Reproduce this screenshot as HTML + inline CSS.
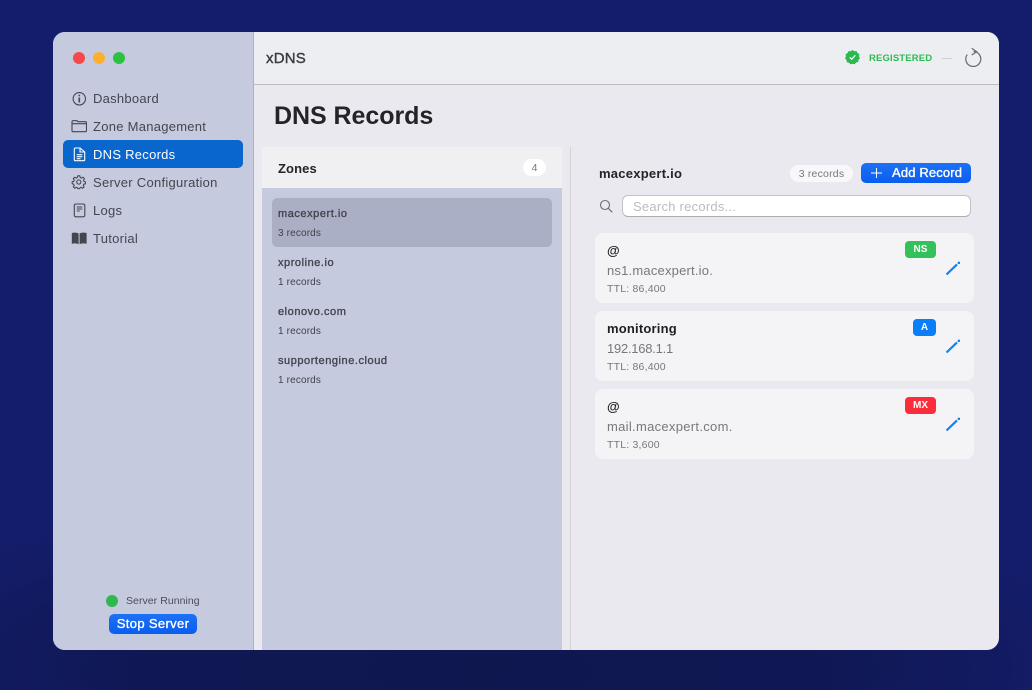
<!DOCTYPE html>
<html><head><meta charset="utf-8"><style>
*{box-sizing:border-box;margin:0;padding:0}
html,body{width:1032px;height:690px;overflow:hidden;background:#141d6b;font-family:"Liberation Sans",sans-serif}
.a{position:absolute;white-space:nowrap}
#bgs{position:absolute;left:0;top:0;width:1032px;height:690px;background:radial-gradient(ellipse 640px 190px at 480px 670px,#0f174f 0%,rgba(15,23,79,.8) 55%,rgba(20,29,107,0) 100%)}
#win{position:absolute;left:53px;top:32px;width:946px;height:618px;border-radius:12px;overflow:hidden;background:#e9e9ef}
.nav{position:absolute;left:40px;font-size:13px;line-height:16px;color:#43454f;letter-spacing:.27px;white-space:nowrap}
.ic{position:absolute;left:18px}
.z1{position:absolute;left:225px;font-size:11px;color:#42444f;line-height:14px;white-space:nowrap;letter-spacing:.55px;-webkit-text-stroke:.35px #42444f}
.z2{position:absolute;left:225px;font-size:10px;color:#3f414c;line-height:13px;white-space:nowrap;letter-spacing:.15px}
.card{position:absolute;left:542px;width:379px;height:70px;background:#f4f4f7;border-radius:8px}
.t1{position:absolute;left:12px;top:9.500px;font-size:13px;font-weight:bold;color:#1f1f22;line-height:16px;letter-spacing:.2px}
.t2{position:absolute;left:12px;top:29.500px;font-size:13px;color:#77777c;line-height:16px;letter-spacing:.2px}
.t3{position:absolute;left:12px;top:49.500px;font-size:10.5px;color:#77777c;line-height:13px;letter-spacing:.2px}
.tag{position:absolute;top:8px;height:17px;border-radius:4px;color:#fff;font-size:10px;font-weight:bold;text-align:center;line-height:18px}
.pen{position:absolute;left:350px;top:27px}
</style></head><body>
<div id="bgs"></div>
<div id="win">
 <div class="a" style="left:0;top:0;width:201px;height:618px;background:#c5cadf;border-right:1px solid #acb0c6"></div>
 <div class="a" style="left:20px;top:20px;width:12px;height:12px;border-radius:50%;background:#f6484a"></div>
 <div class="a" style="left:40px;top:20px;width:12px;height:12px;border-radius:50%;background:#fdb02f"></div>
 <div class="a" style="left:60px;top:20px;width:12px;height:12px;border-radius:50%;background:#2cc13f"></div>

 <div class="a" style="left:10px;top:108px;width:180px;height:28px;border-radius:5px;background:#0866cc"></div>

 <svg class="ic" style="top:59px" width="16" height="16" viewBox="0 0 16 16" fill="none" stroke="#43454f"><circle cx="8.300" cy="7.800" r="6.200" stroke-width="1.100"/><path d="M8.300 6.500v5" stroke-width="1.600"/><path d="M8.300 3.800v1.500" stroke-width="1.600"/></svg>
 <div class="nav" style="top:59px">Dashboard</div>
 <svg class="ic" style="top:87px" width="16" height="16" viewBox="0 0 16 16" fill="none" stroke="#43454f" stroke-width="1.100"><path d="M1 2.800V11.700a1 1 0 0 0 1 1H14.500a1 1 0 0 0 1-1V3.700a1 1 0 0 0-1-1H7L6 1.700H2A1 1 0 0 0 1 2.800Z"/><path d="M1 4.700H15.500"/></svg>
 <div class="nav" style="top:87px">Zone Management</div>
 <svg class="ic" style="top:115px" width="16" height="16" viewBox="0 0 16 16" fill="none" stroke="#fff" stroke-width="1.100"><path d="M3.300 2a1 1 0 0 1 1-1H9L13.700 5V12.700a1 1 0 0 1-1 1H4.300a1 1 0 0 1-1-1Z"/><path d="M9 1V5H13.700"/><path d="M5.700 7.700H11.300M5.700 9.700H11.300M5.700 11.700H9.500"/></svg>
 <div class="nav" style="top:115px;color:#fff">DNS Records</div>
 <svg class="ic" style="top:143px" width="16" height="16" viewBox="0 0 16 16" fill="none" stroke="#43454f" stroke-width="1.100"><g transform="translate(.2 -.6) scale(.95)"><circle cx="8" cy="8" r="2.200"/><path d="M6.900 1.500H9.100L9.500 3.300 10.900 3.900 12.400 2.900 13.900 4.500 13 6 13.500 7.400 15 7.900V10L13.300 10.300 12.700 11.700 13.600 13.200 12 14.600 10.500 13.600 9.200 14.200 8.900 15H7L6.600 14.200 5.200 13.600 3.800 14.600 2.200 13.100 3.200 11.600 2.600 10.200 1 9.900V7.800L2.700 7.400 3.200 6 2.200 4.500 3.700 3 5.200 3.900 6.500 3.300Z" stroke-linejoin="round"/></g></svg>
 <div class="nav" style="top:143px">Server Configuration</div>
 <svg class="ic" style="top:171px" width="16" height="16" viewBox="0 0 16 16" fill="none" stroke="#43454f" stroke-width="1.100"><rect x="3.300" y="1" width="10.500" height="12.800" rx="1.500"/><path d="M5.800 4H11.300M5.800 6H11.300M5.800 8H8.800"/></svg>
 <div class="nav" style="top:171px">Logs</div>
 <svg class="ic" style="top:199px" width="16" height="16" viewBox="0 0 16 16" fill="#43454f"><path d="M7.600 2.500C6 1.500 3 1.300 .8 2V12.800C3 12.200 6 12.300 7.600 13.300ZM8.600 2.500C10 1.500 13.300 1.300 15.600 2V12.800C13.300 12.200 10 12.300 8.600 13.300Z"/></svg>
 <div class="nav" style="top:199px">Tutorial</div>

 <div class="a" style="left:53px;top:563px;width:12px;height:12px;border-radius:50%;background:#2eb84f"></div>
 <div class="a" style="left:73px;top:562px;font-size:10.500px;line-height:14px;color:#4a4c58;letter-spacing:.05px">Server Running</div>
 <div class="a" style="left:56px;top:582px;width:88px;height:20px;border-radius:5px;background:linear-gradient(#1c72f4,#0a5ef0);color:#fff;font-size:13px;line-height:19px;text-align:center;letter-spacing:.35px;-webkit-text-stroke:.35px #fff">Stop Server</div>

 <div class="a" style="left:201px;top:0;width:745px;height:53px;background:#edeef2;border-bottom:1px solid #bdbdc0"></div>
 <div class="a" style="left:213px;top:18px;font-size:15px;line-height:18px;color:#3a3a40;letter-spacing:.2px;-webkit-text-stroke:.4px #3a3a40">xDNS</div>
 <svg class="a" style="left:791px;top:17px" width="17" height="17" viewBox="0 0 17 17"><path d="M8.500 1 10.400 2.200 12.600 2.100 13.500 4 15.400 5.100 15 7.300 16 9.200 14.500 10.800 14.300 13 12.100 13.500 10.700 15.200 8.500 14.700 6.400 15.400 5 13.600 2.800 13.200 2.500 11 1 9.400 2 7.400 1.600 5.200 3.500 4.100 4.400 2.200 6.600 2.300Z" fill="#2bb84f"/><path d="M5.700 8.300 7.700 10.300 11.300 6.300" fill="none" stroke="#fff" stroke-width="1.200"/></svg>
 <div class="a" style="left:816px;top:20px;font-size:9.500px;line-height:13px;font-weight:bold;color:#2fba52;letter-spacing:.15px">REGISTERED</div>
 <div class="a" style="left:889px;top:26px;width:10px;height:1px;background:#cfcfd3"></div>
 <svg class="a" style="left:911px;top:15px" width="18" height="20" viewBox="0 0 18 20" fill="none" stroke="#6a6a6f" stroke-width="1.200"><path d="M3.200 7.600A7.500 7.500 0 1 0 9.500 4.500"/><path d="M7.700 1.300 12.700 4.700 7.700 8"/></svg>

 <div class="a" style="left:221px;top:68px;font-size:25px;line-height:32px;font-weight:bold;color:#242427;letter-spacing:-.05px">DNS Records</div>

 <div class="a" style="left:209px;top:115px;width:300px;height:503px;background:#c5cadf"></div>
 <div class="a" style="left:209px;top:115px;width:300px;height:41px;background:#f0f0f3"></div>
 <div class="a" style="left:225px;top:129px;font-size:13px;line-height:16px;font-weight:bold;color:#242427;letter-spacing:.1px">Zones</div>
 <div class="a" style="left:470px;top:127px;width:23px;height:17px;border-radius:9px;background:#fff;color:#77777c;font-size:10.500px;line-height:19px;text-align:center">4</div>
 <div class="a" style="left:219px;top:166px;width:280px;height:49px;border-radius:5px;background:#abafc5"></div>
 <div class="z1" style="top:175px">macexpert.io</div><div class="z2" style="top:195px">3 records</div>
 <div class="z1" style="top:224px">xproline.io</div><div class="z2" style="top:244px">1 records</div>
 <div class="z1" style="top:273px">elonovo.com</div><div class="z2" style="top:293px">1 records</div>
 <div class="z1" style="top:322px">supportengine.cloud</div><div class="z2" style="top:342px">1 records</div>

 <div class="a" style="left:517px;top:115px;width:1px;height:503px;background:#d3d3d8"></div>

 <div class="a" style="left:546px;top:134px;font-size:13px;line-height:16px;font-weight:bold;color:#242427;letter-spacing:.25px">macexpert.io</div>
 <div class="a" style="left:737px;top:133px;width:63px;height:17px;border-radius:9px;background:#f8f8fa;color:#77777c;font-size:10.500px;line-height:19px;text-align:center;letter-spacing:.2px">3 records</div>
 <div class="a" style="left:808px;top:131px;width:110px;height:20px;border-radius:5px;background:linear-gradient(#1c72f4,#0a5ef0)"></div>
 <svg class="a" style="left:817px;top:135px" width="13" height="13" viewBox="0 0 13 13" stroke="#fff" stroke-width="1"><path d="M6.500 1V11M1 6H12"/></svg>
 <div class="a" style="left:839px;top:132px;font-size:13px;line-height:18px;color:#fff;letter-spacing:.15px;-webkit-text-stroke:.35px #fff">Add Record</div>

 <svg class="a" style="left:546px;top:167px" width="15" height="15" viewBox="0 0 15 15" fill="none" stroke="#6d6d72" stroke-width="1.100"><circle cx="6" cy="6" r="4.500"/><path d="M9.300 9.300 13.300 13.300"/></svg>
 <div class="a" style="left:569px;top:163px;width:349px;height:22px;border-radius:6px;background:#fff;border:1px solid #c2c2c6;border-bottom-color:#adadb1"></div>
 <div class="a" style="left:580px;top:167px;font-size:13px;line-height:16px;color:#bcbcc0;letter-spacing:.25px">Search records...</div>

 <div class="card" style="top:201px"><div class="t1">@</div><div class="t2">ns1.macexpert.io.</div><div class="t3">TTL: 86,400</div>
  <div class="tag" style="left:310px;width:31px;background:#35c159">NS</div>
  <svg class="pen" width="16" height="16" viewBox="0 0 16 16" fill="none"><path d="M1.500 14.500 12 4.400" stroke="#1382f5" stroke-width="2.200"/><rect x="12.700" y="1.700" width="2.300" height="2.300" fill="#1382f5"/></svg></div>
 <div class="card" style="top:279px"><div class="t1">monitoring</div><div class="t2" style="letter-spacing:-.25px">192.168.1.1</div><div class="t3">TTL: 86,400</div>
  <div class="tag" style="left:318px;width:23px;background:#0a7df8">A</div>
  <svg class="pen" width="16" height="16" viewBox="0 0 16 16" fill="none"><path d="M1.500 14.500 12 4.400" stroke="#1382f5" stroke-width="2.200"/><rect x="12.700" y="1.700" width="2.300" height="2.300" fill="#1382f5"/></svg></div>
 <div class="card" style="top:357px"><div class="t1">@</div><div class="t2" style="letter-spacing:.3px">mail.macexpert.com.</div><div class="t3">TTL: 3,600</div>
  <div class="tag" style="left:310px;width:31px;background:#fb2d3a">MX</div>
  <svg class="pen" width="16" height="16" viewBox="0 0 16 16" fill="none"><path d="M1.500 14.500 12 4.400" stroke="#1382f5" stroke-width="2.200"/><rect x="12.700" y="1.700" width="2.300" height="2.300" fill="#1382f5"/></svg></div>
</div>
</body></html>
